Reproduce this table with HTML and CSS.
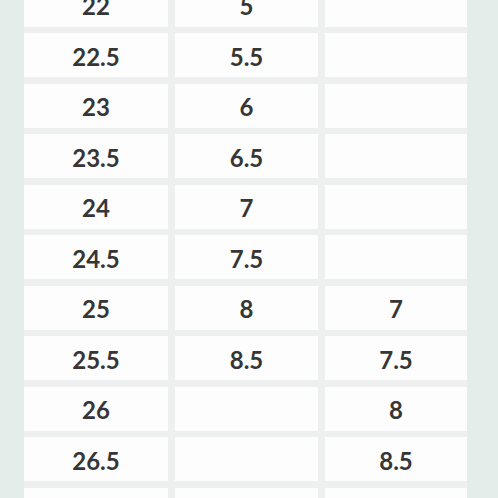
FILE: index.html
```html
<!DOCTYPE html>
<html>
<head>
<meta charset="utf-8">
<link rel="stylesheet" href="styles.css">
</head>
<body>
<div class="wrap">
  <div class="table">
    <div class="cell">22</div><div class="cell">5</div><div class="cell"></div>
    <div class="cell">22.5</div><div class="cell">5.5</div><div class="cell"></div>
    <div class="cell">23</div><div class="cell">6</div><div class="cell"></div>
    <div class="cell">23.5</div><div class="cell">6.5</div><div class="cell"></div>
    <div class="cell">24</div><div class="cell">7</div><div class="cell"></div>
    <div class="cell">24.5</div><div class="cell">7.5</div><div class="cell"></div>
    <div class="cell">25</div><div class="cell">8</div><div class="cell">7</div>
    <div class="cell">25.5</div><div class="cell">8.5</div><div class="cell">7.5</div>
    <div class="cell">26</div><div class="cell"></div><div class="cell">8</div>
    <div class="cell">26.5</div><div class="cell"></div><div class="cell">8.5</div>
    <div class="cell"></div><div class="cell"></div><div class="cell"></div>
  </div>
</div>
</body>
</html>
```
FILE: styles.css
```css
html, body {
  margin: 0;
  padding: 0;
}
body {
  background: #e3eeeb;
  width: 498px;
  height: 498px;
  overflow: hidden;
  font-family: Lato, "Open Sans", sans-serif;
}
.wrap {
  padding-left: 24px;
  margin-top: -17.5px;
}
.table {
  display: grid;
  grid-template-columns: 144px 143px 142px;
  grid-auto-rows: 44px;
  column-gap: 7px;
  row-gap: 6.5px;
  width: 443px;
  background: #eef0ef;
}
.cell {
  background: #fdfdfd;
  display: flex;
  align-items: center;
  justify-content: center;
  font-weight: 700;
  font-size: 24px;
  color: #363636;
  padding-top: 2px;
  box-sizing: border-box;
}
```
